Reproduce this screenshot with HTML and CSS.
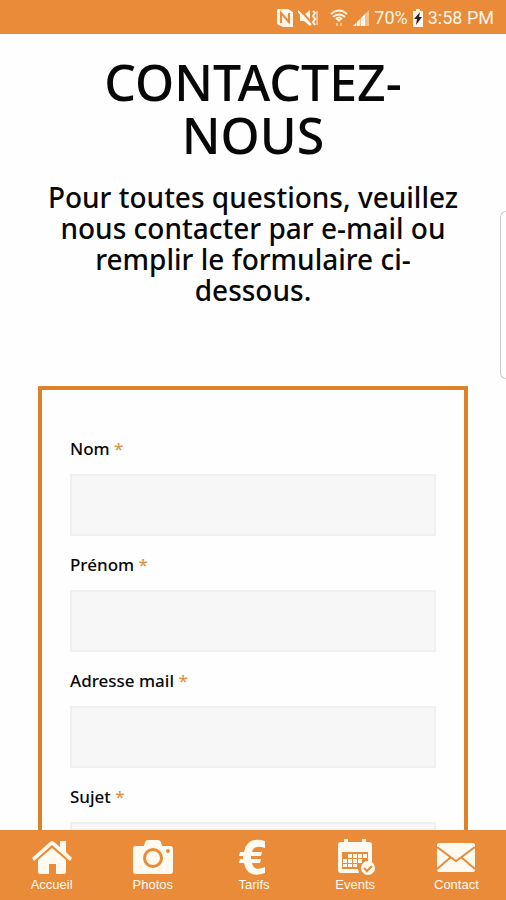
FILE: index.html
```html
<!DOCTYPE html>
<html lang="fr">
<head>
<meta charset="utf-8">
<meta name="viewport" content="width=device-width, initial-scale=1">
<title>Contactez-nous</title>
<link rel="stylesheet" href="styles.css">
</head>
<body>
<header class="status">
  <svg width="18" height="18" viewBox="0 0 18 18" aria-hidden="true"><path fill="currentColor" d="M2 0h10l5 3v15H7l-6-3V1z"/><path class="cut" d="M5 14V4l8 9V4"/></svg>
  <svg class="mute" width="20" height="18" viewBox="0 0 20 18" aria-hidden="true"><path fill="currentColor" d="M2 6h4l6-5v16l-6-5H2z"/><path class="cut" d="M2 1l12 13"/><path class="line" d="M0 2l13 14M15 2l2 2-2 3 2 3-2 3 2 3"/><path class="line faint" d="M19 2v14"/></svg>
  <svg class="wifi" width="18" height="18" viewBox="0 0 18 18" aria-hidden="true"><path class="line" d="M1 5q8-7 16 0M3 8q6-5 12 0M6 10q3-3 6 0"/><path fill="currentColor" d="M6 10h6l-3 3z"/><path class="line faint" d="M7 14v3M11 14v3"/></svg>
  <svg width="18" height="18" viewBox="0 0 18 18" aria-hidden="true"><path fill="currentColor" opacity=".5" d="M1 17L17 1v16z"/><path fill="currentColor" d="M1 17l3-3v3zM5 17v-4l3-3v7zM9 17V9l4-4v12z"/></svg>
  <span class="charge">70%</span>
  <svg class="battery" width="12" height="18" viewBox="0 0 12 18" aria-hidden="true"><path fill="currentColor" d="M4 0h4v2h3v16H1V2h3z"/><path fill="#222" d="M8 3L2 10h3l-1 6 6-8H7z"/></svg>
  <span>3:58 PM</span>
</header>
<main class="page">
  <h1>CONTACTEZ-NOUS</h1>
  <p class="intro">Pour toutes questions, veuillez nous contacter par e-mail ou remplir le formulaire ci-dessous.</p>
  <form class="form">
    <div class="field"><label for="nom">Nom <span>*</span></label><input id="nom" type="text" required></div>
    <div class="field"><label for="prenom">Prénom <span>*</span></label><input id="prenom" type="text" required></div>
    <div class="field"><label for="mail">Adresse mail <span>*</span></label><input id="mail" type="email" required></div>
    <div class="field"><label for="sujet">Sujet <span>*</span></label><input id="sujet" type="text" required></div>
  </form>
</main>
<div class="edge"></div>
<nav class="tabs">
  <a href="#accueil"><svg width="42" height="36" viewBox="0 0 42 36" aria-hidden="true"><path fill="currentColor" d="M29 2h6v11l6 6-2 3L21 6 3 22l-2-3L19 3q2-2 4 0l6 5z"/><path fill="currentColor" d="M21 9l14 12v12q0 2-2 2h-8V25h-7v10H9q-2 0-2-2V21z"/></svg>Accueil</a>
  <a href="#photos"><svg width="42" height="36" viewBox="0 0 42 36" aria-hidden="true"><path fill="currentColor" d="M4 7h8l1-4q1-2 3-2h10q2 0 3 2l1 4h8q3 0 3 3v22q0 3-3 3H4q-3 0-3-3V10q0-3 3-3z"/><circle class="cut wide" cx="21" cy="19" r="8.5"/><circle fill="#e98b39" cx="36" cy="12" r="2"/></svg>Photos</a>
  <a href="#tarifs"><svg width="42" height="36" viewBox="0 0 42 36" aria-hidden="true"><path fill="currentColor" d="M32 2v7q-11-4-13 4h10l-1 4H18v3h10l-1 4h-8q2 9 13 4v6q-18 6-21-10H6l1-4h3v-3H6l1-4h4Q14-3 32 2z"/></svg>Tarifs</a>
  <a href="#events"><svg width="42" height="36" viewBox="0 0 42 36" aria-hidden="true"><path fill="currentColor" fill-rule="evenodd" d="M7 3h3V0h4v3h14V0h4v3h3q3 0 3 3v17l-4 1V13H8v17h16l1 4H7q-3 0-3-3V6q0-3 3-3z"/><path fill="currentColor" d="M14 15h4v4h-4zM19 15h4v4h-4zM24 15h4v4h-4zM29 15h4v4h-4zM9 20h4v4H9zM14 20h4v4h-4zM19 20h4v4h-4zM24 20h4v4h-4zM9 25h4v3H9zM14 25h4v3h-4zM19 25h4v3h-4z"/><circle fill="currentColor" cx="34" cy="29" r="7"/><path class="cut" d="M30 29l3 3 5-5"/></svg>Events</a>
  <a href="#contact" aria-current="page"><svg width="42" height="36" viewBox="0 0 42 36" aria-hidden="true"><rect fill="currentColor" x="2" y="4" width="38" height="29" rx="2"/><path class="cut" d="M2 8l19 14L40 8M2 30l14-12M40 30L26 18"/></svg>Contact</a>
</nav>
</body>
</html>
```
FILE: styles.css
```css
* { box-sizing: border-box; }
body {
  margin: 0;
  height: 100vh;
  display: flex;
  flex-direction: column;
  overflow: hidden;
  background: #fefefe;
  color: #080808;
  font-family: "Noto Sans", "Open Sans", sans-serif;
}
.status {
  flex: none;
  height: 34px;
  padding: 2px 12px 0 0;
  display: flex;
  align-items: center;
  justify-content: flex-end;
  gap: 4px;
  background: #e98b39;
  color: #fff5e8;
  font: 18px/24px Roboto, sans-serif;
}
.mute { margin-right: 8px; }
.line { fill: none; stroke: currentColor; stroke-width: 2; }
.faint { opacity: .5; }
.cut { fill: none; stroke: #e98b39; stroke-width: 2; }
.cut.wide { stroke-width: 3; }
.page {
  flex: 1;
  min-height: 0;
  overflow: hidden;
  padding: 22px 38px 0;
}
h1 {
  margin: 0 0 20px;
  font-size: 50px;
  line-height: 53px;
  font-weight: 500;
  text-align: center;
}
.intro {
  margin: 0 0 80px;
  font-size: 28px;
  line-height: 31px;
  font-weight: 500;
  text-align: center;
}
.form {
  border: 4px solid #dc8229;
  padding: 46px 28px;
}
.field { margin-bottom: 16px; }
label {
  display: block;
  margin-bottom: 12px;
  font-size: 17px;
  line-height: 26px;
  font-weight: 500;
}
label span { color: #dc9448; }
input {
  display: block;
  width: 100%;
  height: 62px;
  padding: 0 16px;
  border: 2px solid #f0f0f0;
  background: #f7f7f7;
  font: inherit;
}
.edge {
  position: absolute;
  top: 211px;
  right: 0;
  width: 6px;
  height: 168px;
  border: 1px solid #ccc;
  border-right: 0;
  border-radius: 6px 0 0 6px;
}
.tabs {
  flex: none;
  height: 70px;
  display: flex;
  background: #e98b39;
}
.tabs a {
  flex: 1;
  padding: 9px 0 0 2px;
  display: flex;
  flex-direction: column;
  align-items: center;
  color: #fffaf0;
  text-decoration: none;
  font: 13px/20px "Liberation Sans", sans-serif;
}
```
